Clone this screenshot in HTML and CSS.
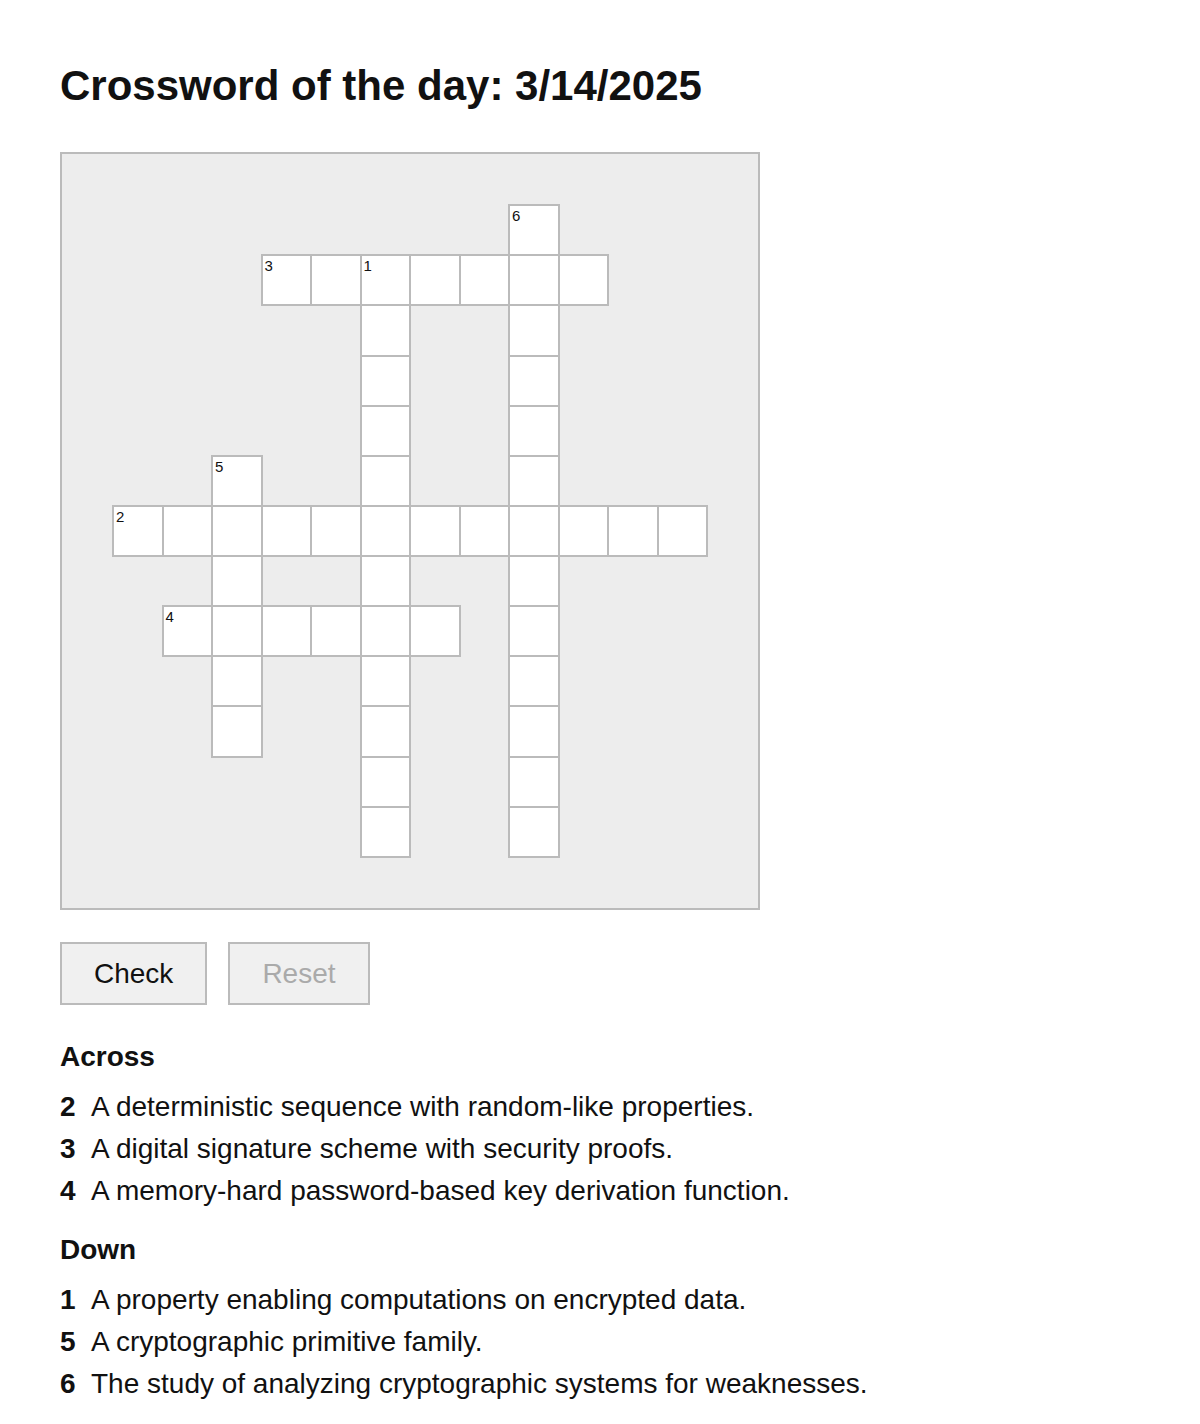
FILE: index.html
```html
<!DOCTYPE html>
<html lang="en">
<head>
    <meta charset="UTF-8">
    <meta name="viewport" content="width=device-width, initial-scale=1.0">
    <title>Crossword of the day</title>
    <link rel="stylesheet" href="styles.css">
</head>

<body>
    <div class="page">
        <h1>Crossword of the day: 3/14/2025</h1>

        <!-- Board -->
        <div class="board">
            <div class="grid" id="grid"></div>
        </div>

        <div class="actions">
            <button class="btn" onclick="checkGrid()">Check</button>
            <button class="btn" id="reset" disabled>Reset</button>
        </div>

        <!-- Clues -->
        <section class="clues">
            <h2>Across</h2>
            <ol>
                <li><span class="clue-num">2</span>A deterministic sequence with random-like properties.</li>
                <li><span class="clue-num">3</span>A digital signature scheme with security proofs.</li>
                <li><span class="clue-num">4</span>A memory-hard password-based key derivation function.</li>
            </ol>
        </section>
        <section class="clues">
            <h2>Down</h2>
            <ol>
                <li><span class="clue-num">1</span>A property enabling computations on encrypted data.</li>
                <li><span class="clue-num">5</span>A cryptographic primitive family.</li>
                <li><span class="clue-num">6</span>The study of analyzing cryptographic systems for weaknesses.</li>
            </ol>
        </section>
    </div>

    <script>
        // col / row are zero based, the board is 14 x 15
        const words = [
            { num: 1, dir: 'down', col: 6, row: 2, len: 12 },
            { num: 2, dir: 'across', col: 1, row: 7, len: 12 },
            { num: 3, dir: 'across', col: 4, row: 2, len: 7 },
            { num: 4, dir: 'across', col: 2, row: 9, len: 6 },
            { num: 5, dir: 'down', col: 3, row: 6, len: 6 },
            { num: 6, dir: 'down', col: 9, row: 1, len: 13 }
        ];

        const cells = {};
        words.forEach(w => {
            for (let i = 0; i < w.len; i++) {
                const col = w.dir === 'across' ? w.col + i : w.col;
                const row = w.dir === 'down' ? w.row + i : w.row;
                const key = row * 100 + col;
                if (!cells[key]) cells[key] = { col, row, num: null };
                if (i === 0) cells[key].num = w.num;
            }
        });

        const grid = document.getElementById('grid');
        Object.keys(cells).map(Number).sort((a, b) => a - b).forEach(key => {
            const c = cells[key];
            const cell = document.createElement('div');
            cell.className = 'cell';
            cell.style.gridColumn = c.col + 1;
            cell.style.gridRow = c.row + 1;
            if (c.num) {
                const num = document.createElement('span');
                num.className = 'num';
                num.textContent = c.num;
                cell.appendChild(num);
            }
            const input = document.createElement('input');
            input.maxLength = 1;
            input.addEventListener('input', () => {
                document.getElementById('reset').disabled = false;
            });
            cell.appendChild(input);
            grid.appendChild(cell);
        });

        function checkGrid() {
            // no answers shipped with the page yet
        }
    </script>
</body>
</html>
```

FILE: styles.css
```css
body, html {
    margin: 0;
    padding: 0;
    font-family: "Liberation Sans", Arial, Helvetica, sans-serif;
    background-color: #ffffff;
    color: #111111;
}

.page {
    padding: 60px;
}

h1 {
    margin: 2px 0 42px 0;
    font-size: 42px;
    font-weight: bold;
}

.board {
    width: 696px;
    height: 754px;
    border: 2px solid #bbbbbb;
    background-color: #ededed;
}

.grid {
    display: grid;
    grid-template-columns: repeat(14, 49.5px);
    grid-template-rows: repeat(15, 50.125px);
    padding-left: 0.5px;
}

.cell {
    position: relative;
    box-sizing: border-box;
    width: calc(100% + 2px);
    height: calc(100% + 2px);
    border: 2px solid #bbbbbb;
    background-color: #ffffff;
}

.cell .num {
    position: absolute;
    top: 1px;
    left: 2px;
    font-size: 15px;
    line-height: normal;
    color: #111111;
}

.cell input {
    box-sizing: border-box;
    width: 100%;
    height: 100%;
    border: none;
    padding: 0;
    background: transparent;
    font-family: inherit;
    font-size: 24px;
    text-align: center;
    text-transform: uppercase;
    outline: none;
}

.actions {
    display: flex;
    gap: 21px;
    margin: 32px 0 36px 0;
}

.btn {
    font-family: inherit;
    font-size: 28px;
    line-height: normal;
    padding: 14px 32px 13px 32px;
    border: 2px solid #bbbbbb;
    border-radius: 0;
    background-color: #f0f0f0;
    color: #111111;
    cursor: pointer;
}

.btn:disabled {
    color: #aaaaaa;
    cursor: default;
}

.clues {
    font-size: 28px;
}

.clues + .clues {
    margin-top: 22px;
}

.clues h2 {
    margin: 0 0 13px 0;
    font-size: 28px;
    line-height: normal;
}

.clues ol {
    list-style: none;
    margin: 0;
    padding: 0;
}

.clues li {
    line-height: 42px;
}

.clue-num {
    display: inline-block;
    width: 31px;
    font-weight: bold;
}
```
